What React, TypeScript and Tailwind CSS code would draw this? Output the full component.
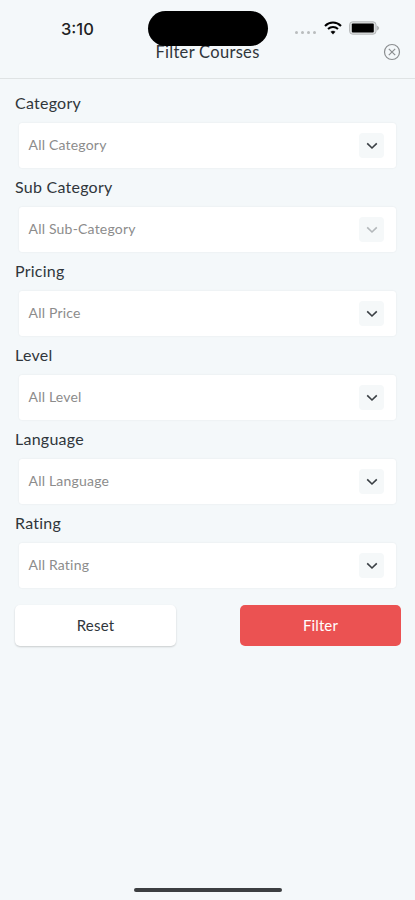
import React from 'react';

interface FilterField {
  label: string;
  placeholder: string;
  disabled?: boolean;
}

const fields: FilterField[] = [
  { label: 'Category', placeholder: 'All Category' },
  { label: 'Sub Category', placeholder: 'All Sub-Category', disabled: true },
  { label: 'Pricing', placeholder: 'All Price' },
  { label: 'Level', placeholder: 'All Level' },
  { label: 'Language', placeholder: 'All Language' },
  { label: 'Rating', placeholder: 'All Rating' },
];

const WifiIcon = () => (
  <svg width="18" height="14" viewBox="0 0 18 14" fill="none">
    <path d="M1 4.9C5.6.4 12.4.4 17 4.9" stroke="#000" strokeWidth="2.1" />
    <path d="M4 8C6.9 5.2 11.1 5.2 14 8" stroke="#000" strokeWidth="2" />
    <path d="M9 13.2 6.8 10.8C8 9.7 10 9.7 11.2 10.8Z" fill="#000" stroke="#000" strokeWidth="0.4" />
  </svg>
);

const BatteryIcon = () => (
  <svg width="31" height="14" viewBox="0 0 31 14">
    <rect x="0.6" y="0.8" width="26.4" height="12.4" rx="3" fill="#dcdfe0" stroke="#b4b7b8" strokeWidth="1" />
    <rect x="2.8" y="2.6" width="22" height="8.8" rx="1" fill="#000" />
    <path d="M27.6 4.4C31 5.6 31 8.4 27.6 9.6Z" fill="#b4b7b8" />
  </svg>
);

const CloseIcon = () => (
  <svg width="18" height="18" viewBox="0 0 18 18" fill="none" stroke="#8b8e90" strokeWidth="1.2">
    <circle cx="9" cy="9" r="7.5" />
    <path d="M5.8 5.8 12.2 12.2M12.2 5.8 5.8 12.2" />
  </svg>
);

const ChevronIcon = ({ disabled }: { disabled?: boolean }) => (
  <svg
    width="12"
    height="8"
    viewBox="0 0 12 8"
    fill="none"
    className={disabled ? 'text-[#b4b8bb]' : 'text-[#3a3f44]'}
  >
    <path d="M1.2 1.4 6 6 10.8 1.4" stroke="currentColor" strokeWidth="1.6" />
  </svg>
);

const SelectField: React.FC<FilterField> = ({ label, placeholder, disabled }) => (
  <div className="h-[84px]">
    <label className="block h-8 text-[16px] leading-6 tracking-[0.25px] text-[#30363b]">{label}</label>
    <button
      disabled={disabled}
      className="ml-1 flex h-[45px] w-[377px] items-center justify-between rounded-[3px] bg-white pr-3 pl-[9.5px] shadow-[0_0_2px_rgba(0,0,0,0.08)]"
    >
      <span className="pb-[2px] text-[14px] tracking-[0.2px] text-[#8c8c8c]">{placeholder}</span>
      <span className="flex h-[25px] w-[25px] items-center justify-center rounded-[4px] bg-[#f5f8f9]">
        <ChevronIcon disabled={disabled} />
      </span>
    </button>
  </div>
);

const App: React.FC = () => {
  return (
    <div className="relative flex h-[900px] w-[415px] flex-col overflow-hidden bg-[#f4f8fa] font-['Lato',sans-serif]">
      <header className="relative h-[79px] shrink-0 border-b border-[#dfe3e4]">
        <h1 className="absolute top-[40px] left-0 w-full text-center text-[16.5px] leading-6 tracking-[0.3px] text-[#30363b]">
          Filter Courses
        </h1>
        <button className="absolute top-[43px] right-[14px]">
          <CloseIcon />
        </button>
        {/* Status bar */}
        <span className="absolute top-[19px] left-[61px] font-['Inter',sans-serif] text-[16.5px] leading-5 font-medium text-[#222]">
          3:10
        </span>
        <div className="absolute top-[11px] left-[148px] h-[35px] w-[120px] rounded-full bg-black" />
        <div className="absolute top-[31px] left-[295px] flex gap-[3px]">
          {[0, 1, 2, 3].map(dot => (
            <span key={dot} className="h-[3px] w-[3px] rounded-full bg-[#b9bcbd]" />
          ))}
        </div>
        <div className="absolute top-[21px] left-[324px]">
          <WifiIcon />
        </div>
        <div className="absolute top-[21px] left-[349px]">
          <BatteryIcon />
        </div>
      </header>

      <main className="flex-1 px-[15px] pt-3">
        {fields.map(field => (
          <SelectField key={field.label} {...field} />
        ))}
        <div className="-mr-px mt-[10px] flex justify-between">
          <button className="h-[41px] w-[161px] rounded-[5px] bg-white text-[15px] tracking-[0.2px] text-[#30363b] shadow-[0_1px_2px_rgba(0,0,0,0.18)]">
            Reset
          </button>
          <button className="h-[41px] w-[161px] rounded-[5px] bg-[#eb5252] text-[15px] tracking-[0.1px] text-white">
            Filter
          </button>
        </div>
      </main>

      <div className="mx-auto mb-[8px] h-[4px] w-[148px] rounded-full bg-[#3c3f41]" />
    </div>
  );
};

export default App;
